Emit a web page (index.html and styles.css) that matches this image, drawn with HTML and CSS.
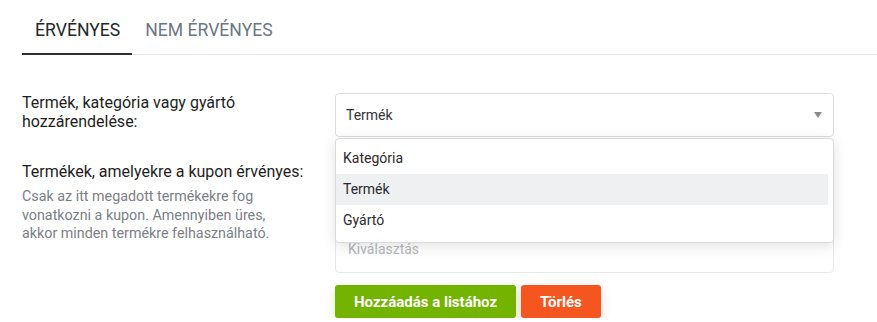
FILE: index.html
```html
<!DOCTYPE html>
<html lang="hu">
<head>
    <meta charset="UTF-8">
    <meta name="viewport" content="width=device-width, initial-scale=1.0">
    <title>Kupon termékek</title>
    <link rel="stylesheet" href="styles.css">
</head>
<body>
    <div class="tabs">
        <div class="tab active">Érvényes</div>
        <div class="tab">Nem érvényes</div>
    </div>

    <div class="form">
        <div class="row">
            <label class="label">Termék, kategória vagy gyártó hozzárendelése:</label>
            <div class="field">
                <div class="select">
                    <span>Termék</span>
                    <span class="arrow"></span>
                </div>
                <ul class="dropdown">
                    <li>Kategória</li>
                    <li class="hover">Termék</li>
                    <li>Gyártó</li>
                </ul>
            </div>
        </div>

        <div class="row second">
            <div class="label">
                <div>Termékek, amelyekre a kupon érvényes:</div>
                <p class="help">Csak az itt megadott termékekre fog vonatkozni a kupon. Amennyiben üres, akkor minden termékre felhasználható.</p>
            </div>
            <div class="field">
                <div class="picker">
                    <span class="placeholder">Kiválasztás</span>
                </div>
            </div>
        </div>

        <div class="actions">
            <button class="btn add">Hozzáadás a listához</button>
            <button class="btn delete">Törlés</button>
        </div>
    </div>
</body>
</html>
```

FILE: styles.css
```css
body { margin: 0; font-family: Roboto, "Liberation Sans", sans-serif; color: #212529; background: #fff; }

.tabs { display: flex; margin: 8px 0 0 22px; border-bottom: 1px solid #e6e6e6; }
.tab { padding: 11px 12px 12px 13px; font-size: 17.6px; line-height: 22px; text-transform: uppercase; color: #6c7785; border-bottom: 2px solid transparent; margin-bottom: -1px; }
.tab.active { color: #23272b; border-bottom-color: #2b2f33; }

.form { padding: 38px 43px 0 22px; }
.row { display: flex; }
.row.second { margin-top: 25px; }
.label { width: 293px; padding-right: 20px; flex: none; font-size: 16px; line-height: 19px; color: #1e1e1e; }
.help { margin: 6px 0 0; font-size: 14.3px; line-height: 18.5px; color: #7b8088; width: 272px; }
.field { flex: 1; position: relative; }

.select { display: flex; align-items: center; justify-content: space-between; height: 42px; padding: 0 10px; border: 1px solid #dcdcdc; border-radius: 4px; font-size: 14px; color: #333; }
.arrow { width: 0; height: 0; border-left: 4px solid transparent; border-right: 4px solid transparent; border-top: 6px solid #8a8a8a; margin-right: 1px; }

.dropdown { position: absolute; top: 45px; left: 0; right: 0; margin: 0; padding: 4px 5px 6px 0; list-style: none; background: #fff; border: 1px solid #dadada; border-radius: 4px; box-shadow: 0 3px 14px rgba(0, 0, 0, 0.12); z-index: 2; }
.dropdown li { height: 31px; line-height: 31px; padding-left: 7px; font-size: 14px; color: #2b2b2b; }
.dropdown li.hover { background: #eff0f2; }

.picker { box-sizing: border-box; height: 111px; border: 1px solid #e8e9eb; border-radius: 4px; display: flex; align-items: flex-end; padding: 0 12px 15px; box-shadow: 0 6px 12px -8px rgba(0, 0, 0, 0.08) inset; }
.placeholder { font-size: 14px; color: #b4b7bb; }

.actions { display: flex; gap: 5px; margin: 12px 0 0 313px; }
.btn { height: 33px; padding: 0 19px; border: none; border-radius: 3px; font-family: inherit; font-size: 15px; font-weight: 700; color: #fff; cursor: pointer; }
.btn.add { background: #72b400; box-shadow: 0 4px 10px rgba(114, 180, 0, 0.25); }
.btn.delete { background: #f55620; box-shadow: 0 4px 10px rgba(245, 86, 32, 0.25); }
```
